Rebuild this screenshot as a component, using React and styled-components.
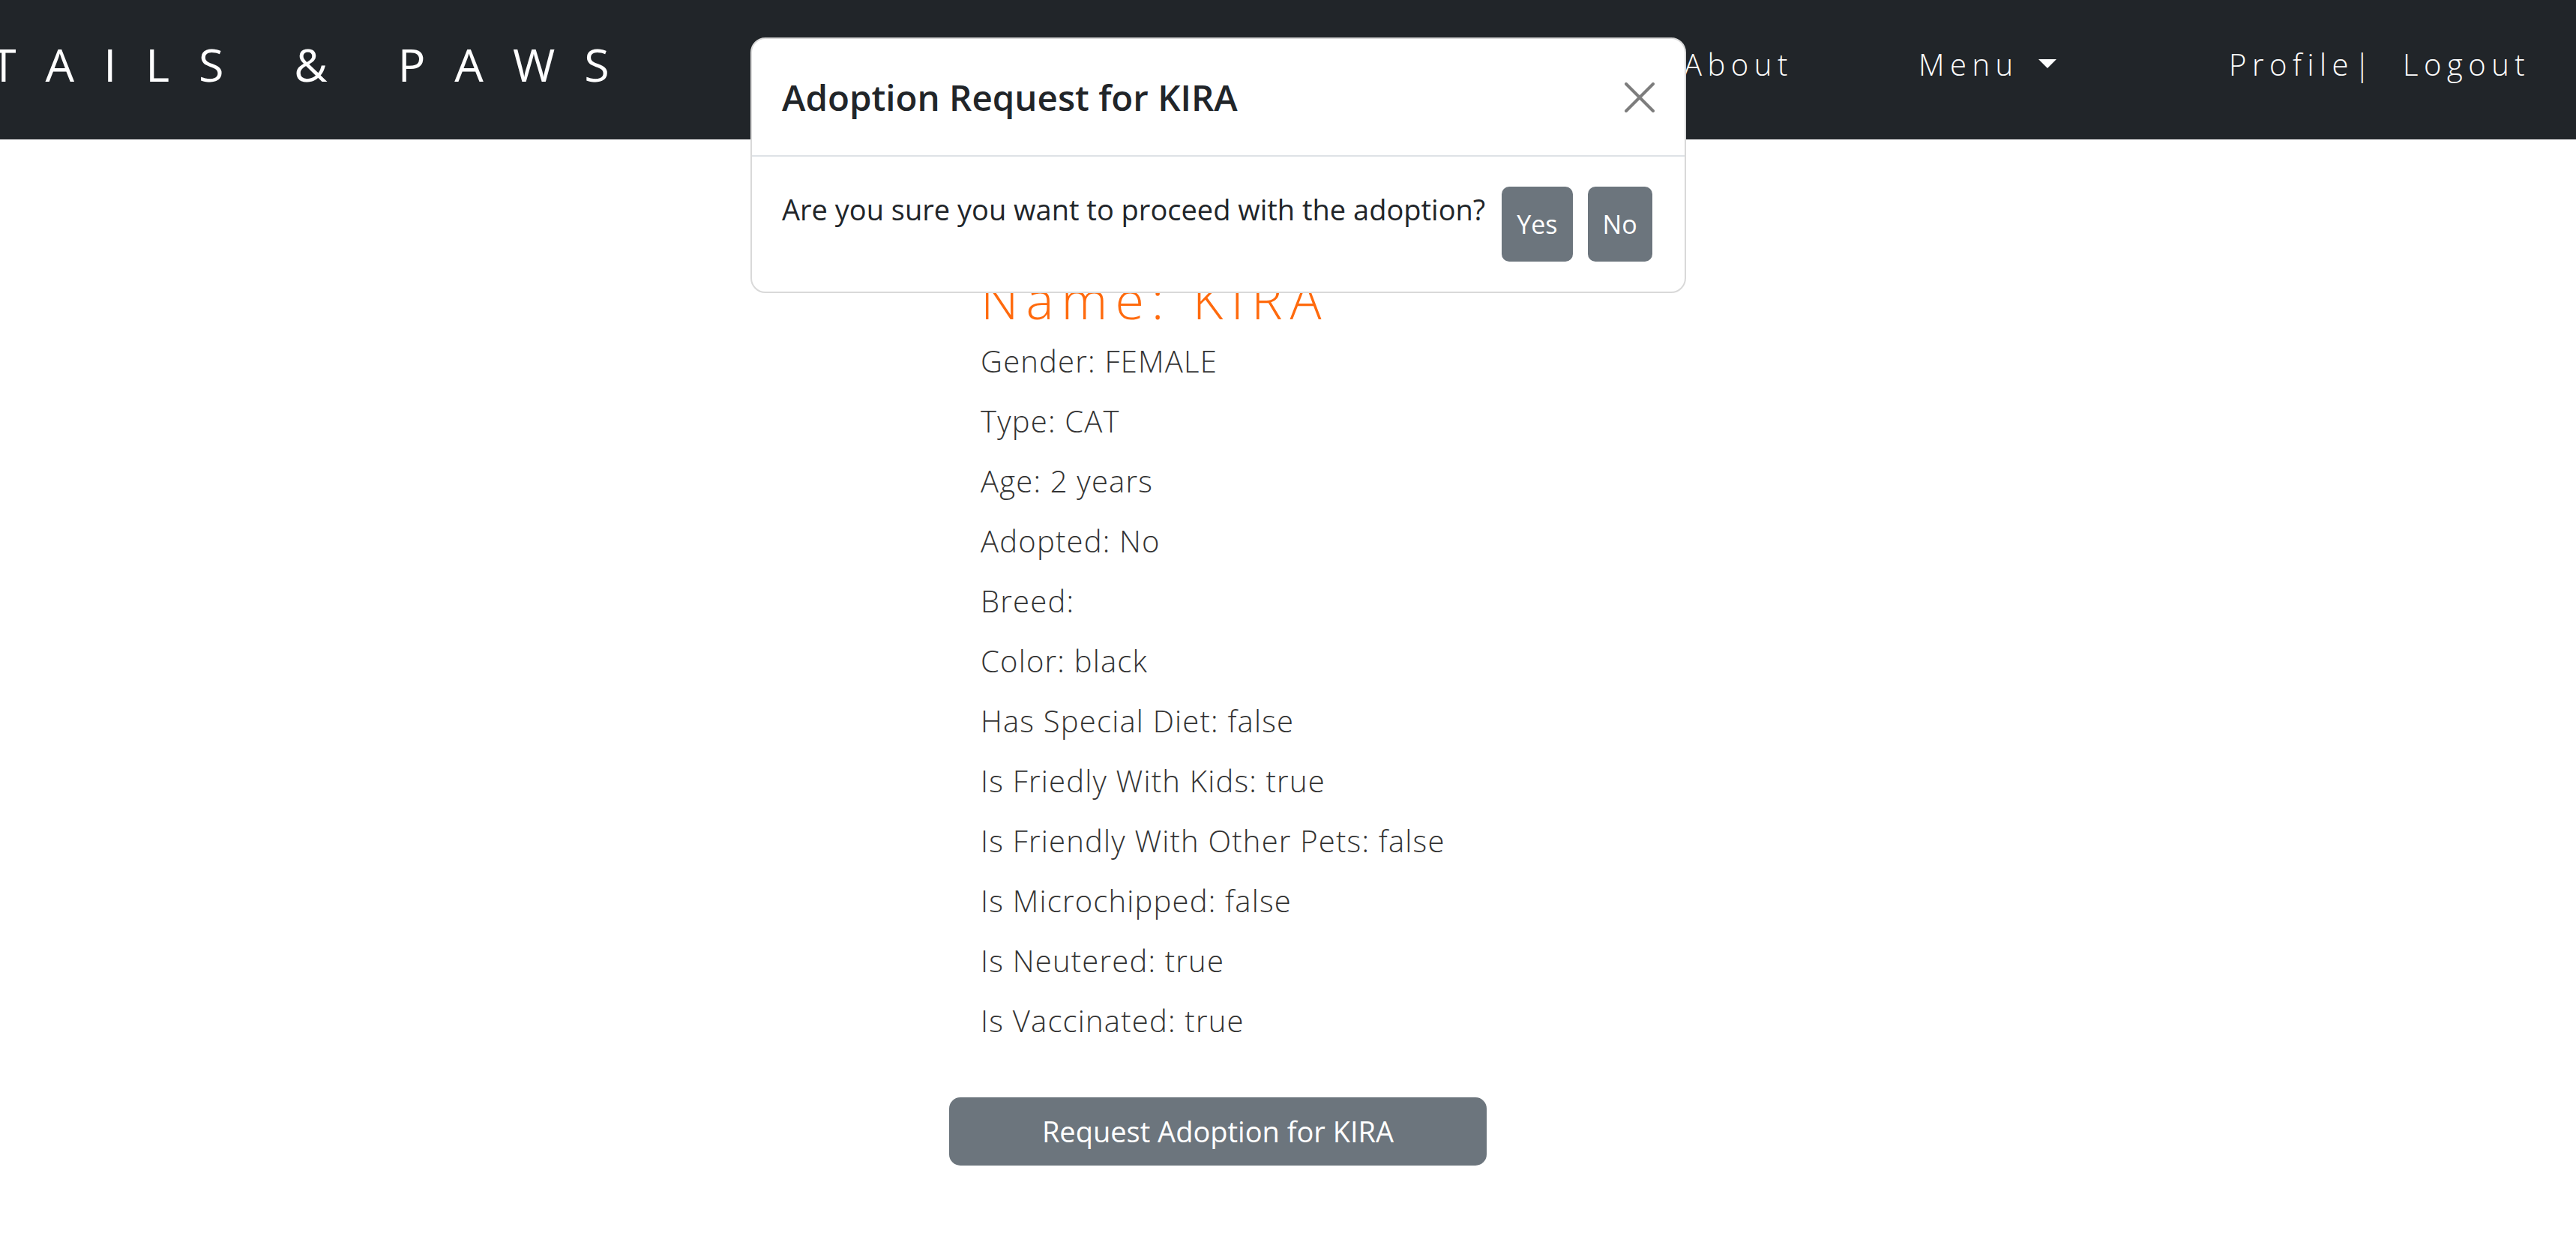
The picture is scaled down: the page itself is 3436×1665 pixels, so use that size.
import React from 'react';
import styled, { createGlobalStyle } from 'styled-components';

const GlobalStyle = createGlobalStyle`
  html, body {
    margin: 0;
    padding: 0;
    background: #fff;
    font-family: "Open Sans", "Noto Sans", sans-serif;
    color: #212529;
    overflow: hidden;
  }
  * { box-sizing: border-box; }
`;

// navbar
const NavBar = styled.nav`
  display: grid;
  grid-template-columns: 2246px 313px 414px 232px 1fr;
  align-items: center;
  height: 186px;
  padding-bottom: 16px;
  background: #212529;
  overflow: hidden;
`;

const Logo = styled.div`
  margin-left: -12px;
  font-size: 61px;
  font-weight: 400;
  letter-spacing: 39px;
  color: #fff;
  white-space: nowrap;
`;

const NavLink = styled.a`
  font-size: 40px;
  font-weight: 300;
  letter-spacing: 7.5px;
  color: #fff;
  white-space: nowrap;
  text-decoration: none;
  display: flex;
  align-items: center;
`;

const Caret = styled.span`
  display: inline-block;
  margin-left: 26px;
  width: 0;
  height: 0;
  border-top: 12px solid #fff;
  border-left: 12px solid transparent;
  border-right: 12px solid transparent;
`;

// pet detail
const Content = styled.main`
  margin-left: 1266px;
  width: 717px;
  padding-top: 171px;
  display: flex;
  flex-direction: column;
`;

const Info = styled.div`
  padding-left: 42px;
`;

const PetName = styled.h2`
  margin: 0 0 11px;
  font-size: 70px;
  line-height: 1.2;
  font-weight: 300;
  letter-spacing: 10px;
  color: #ff6a0d;
  white-space: nowrap;
`;

const Detail = styled.p`
  margin: 0 0 20px;
  font-size: 40px;
  line-height: 60px;
  font-weight: 300;
  letter-spacing: 1.2px;
  color: #333;
  white-space: nowrap;
`;

const Button = styled.button`
  border: none;
  border-radius: ${(p) => (p.$small ? '10px' : '15px')};
  background: #6c757d;
  color: #fff;
  font-family: inherit;
  font-size: ${(p) => (p.$small ? '34px' : '38px')};
  line-height: 1.5;
  padding: ${(p) => (p.$small ? '0 20px' : '17px 30px')};
  cursor: pointer;
`;

const RequestButton = styled(Button)`
  margin-top: 52px;
  width: 100%;
`;

// modal
const Modal = styled.div`
  position: fixed;
  top: 50px;
  left: 1001px;
  width: 1248px;
  background: #fff;
  border: 2px solid #d9d9d9;
  border-radius: 20px;
  z-index: 10;
`;

const ModalHeader = styled.div`
  display: flex;
  align-items: center;
  justify-content: space-between;
  padding: 40px;
  border-bottom: 2px solid #dee2e6;
`;

const ModalTitle = styled.h5`
  margin: 0;
  font-size: 47.5px;
  line-height: 75px;
  font-weight: 600;
  color: #212529;
`;

const CloseButton = styled.button`
  border: none;
  background: transparent;
  padding: 0;
  width: 40px;
  height: 40px;
  cursor: pointer;
  display: flex;
  align-items: center;
  justify-content: center;
`;

const ModalBody = styled.div`
  display: flex;
  align-items: stretch;
  padding: 40px;
  gap: 20px;
`;

const Question = styled.p`
  margin: 0 2px 0 0;
  font-size: 38px;
  line-height: 60px;
  color: #212529;
  white-space: nowrap;
  height: 100px;
`;

const details = [
  'Gender: FEMALE',
  'Type: CAT',
  'Age: 2 years',
  'Adopted: No',
  'Breed:',
  'Color: black',
  'Has Special Diet: false',
  'Is Friedly With Kids: true',
  'Is Friendly With Other Pets: false',
  'Is Microchipped: false',
  'Is Neutered: true',
  'Is Vaccinated: true',
];

export default function App() {
  return (
    <>
      <GlobalStyle />
      <NavBar>
        <Logo>TAILS &amp; PAWS</Logo>
        <NavLink href="#">About</NavLink>
        <NavLink href="#">
          Menu
          <Caret />
        </NavLink>
        <NavLink href="#">Profile|</NavLink>
        <NavLink href="#">Logout</NavLink>
      </NavBar>

      <Content>
        <Info>
          <PetName>Name: KIRA</PetName>
          {details.map((d) => (
            <Detail key={d}>{d}</Detail>
          ))}
        </Info>
        <RequestButton>Request Adoption for KIRA</RequestButton>
      </Content>

      <Modal>
        <ModalHeader>
          <ModalTitle>Adoption Request for KIRA</ModalTitle>
          <CloseButton aria-label="Close">
            <svg width="40" height="40" viewBox="0 0 40 40">
              <path d="M2 2 L38 38 M38 2 L2 38" stroke="#7d7d7d" strokeWidth="4" strokeLinecap="round" />
            </svg>
          </CloseButton>
        </ModalHeader>
        <ModalBody>
          <Question>Are you sure you want to proceed with the adoption?</Question>
          <Button $small>Yes</Button>
          <Button $small>No</Button>
        </ModalBody>
      </Modal>
    </>
  );
}
